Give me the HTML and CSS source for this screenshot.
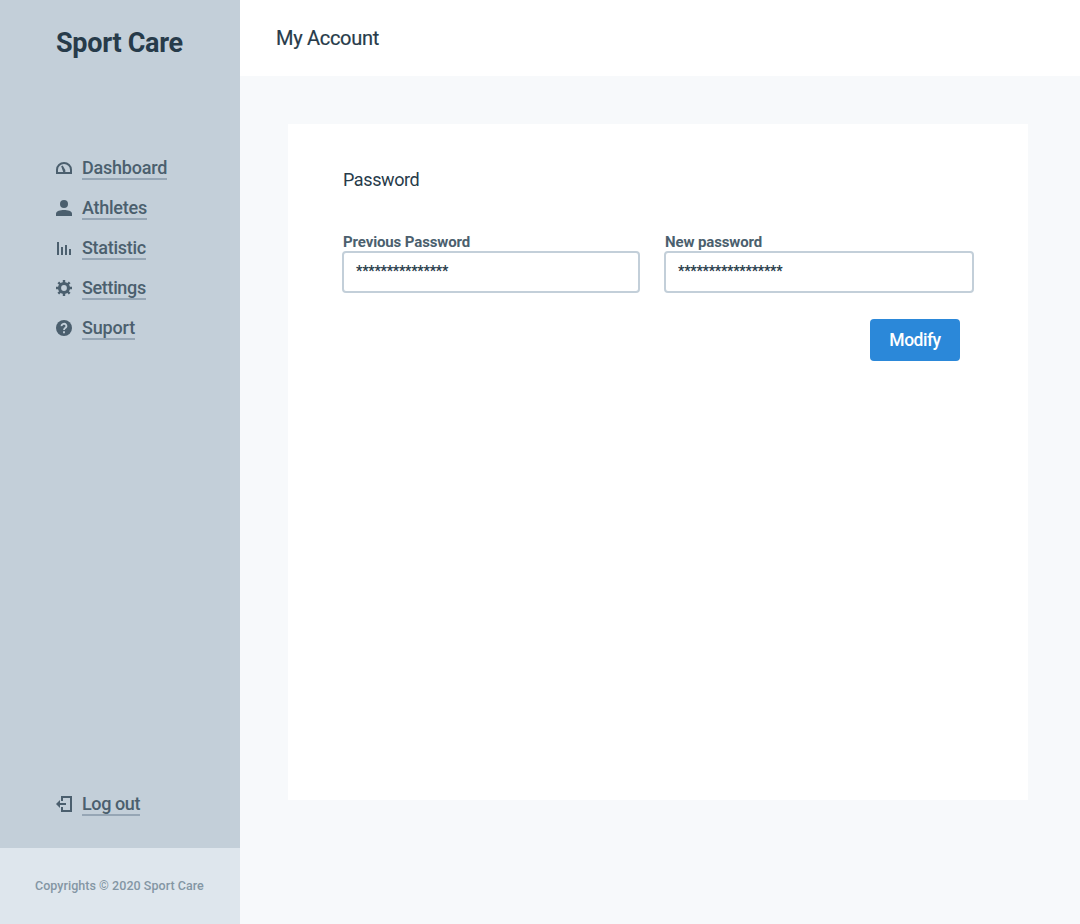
FILE: index.html
```html
<!DOCTYPE html>
<html lang="en">
<head>
<meta charset="utf-8">
<title>Sport Care</title>
<link rel="stylesheet" href="styles.css">
</head>
<body>
<div class="app">
  <aside class="sidebar">
    <h1 class="brand">Sport Care</h1>
    <nav class="nav">
      <a class="item"><svg class="icon" viewBox="0 0 16 16"><path d="M1 13V9.700a7 6.700 0 0 1 14 0V13Z" fill="none" stroke="currentColor" stroke-width="2"/><path d="M5.200 6.300 6.700 5.600 9.300 10v2H7.200Z" fill="currentColor"/></svg><span class="label dashboard">Dashboard</span></a>
      <a class="item"><svg class="icon" viewBox="0 0 16 16" fill="currentColor"><circle cx="8" cy="4" r="4"/><path d="M0 16v-2.500c0-2.400 4.500-3.500 8-3.500s8 1.100 8 3.500V16Z"/></svg><span class="label athletes">Athletes</span></a>
      <a class="item"><svg class="icon" viewBox="0 0 16 16" fill="currentColor"><path d="M1 2h2v13H1zM5 7h2v8H5zM9 5h2v10H9zM13 9h2v6h-2z"/></svg><span class="label statistic">Statistic</span></a>
      <a class="item"><svg class="icon" viewBox="0 0 16 16"><circle cx="8" cy="8" r="4.500" fill="none" stroke="currentColor" stroke-width="3.200"/><path d="M8 0v3M8 13v3M0 8h3M13 8h3M2.300 2.300l2.200 2.200M11.500 11.500l2.200 2.200M2.300 13.700l2.200-2.200M11.500 4.500l2.200-2.200" stroke="currentColor" stroke-width="2.400"/></svg><span class="label settings">Settings</span></a>
      <a class="item"><svg class="icon" viewBox="0 0 16 16"><circle cx="8" cy="8" r="8" fill="currentColor"/><path d="M5.600 6.200a2.400 2.200 0 1 1 3.600 1.700C8.300 8.500 8 8.900 8 10M8 11.300v1.900" fill="none" stroke="#c3cfd9" stroke-width="1.800"/></svg><span class="label suport">Suport</span></a>
    </nav>
    <a class="item logout"><svg class="icon" viewBox="0 0 16 16"><path d="M6 5V1h9v14H6v-4" fill="none" stroke="currentColor" stroke-width="2"/><path d="M0 8l4-4v3h6v2H4v3Z" fill="currentColor"/></svg><span class="label log">Log out</span></a>
    <footer class="footer"><span class="copy">Copyrights © 2020 Sport Care</span></footer>
  </aside>
  <div class="main">
    <header class="topbar"><h2 class="title">My Account</h2></header>
    <main class="card">
      <h3 class="heading">Password</h3>
      <form class="fields">
        <div class="field previous">
          <label class="caption">Previous Password</label>
          <div class="box">***************</div>
        </div>
        <div class="field next">
          <label class="caption">New password</label>
          <div class="box">*****************</div>
        </div>
      </form>
      <div class="actions"><button class="button" type="button">Modify</button></div>
    </main>
  </div>
</div>
</body>
</html>
```
FILE: styles.css
```css
* { box-sizing: border-box; }
body { margin: 0; font-family: Roboto, "Liberation Sans", sans-serif; color: #273b4a; }
h1, h2, h3 { margin: 0; }
.app { display: flex; width: 1080px; height: 924px; background: #f7f9fb; }
.sidebar { display: flex; flex-direction: column; width: 240px; background: #c3cfd9; }
.brand { height: 148px; padding: 27px 0 0 56px; font-size: 27px; line-height: 32px; font-weight: 700; letter-spacing: -0.3px; white-space: nowrap; }
.nav { display: flex; flex-direction: column; }
.item { display: flex; align-items: center; gap: 10px; height: 40px; padding-left: 56px; color: #4b5f6e; }
.icon { width: 16px; height: 16px; flex: none; }
.label { height: 24px; border-bottom: 2px solid #96a6b5; font-size: 18px; line-height: 24px; font-weight: 500; white-space: nowrap; }
.dashboard { letter-spacing: -0.22px; }
.athletes { letter-spacing: -0.25px; }
.statistic { letter-spacing: -0.28px; }
.settings { letter-spacing: -0.35px; }
.suport { letter-spacing: -0.17px; }
.log { letter-spacing: -0.4px; }
.logout { margin-top: auto; margin-bottom: 24px; }
.footer { height: 76px; padding: 30px 0 0 35px; background: #dee6ed; color: #8496a4; font-size: 12.500px; line-height: 16px; font-weight: 500; letter-spacing: 0.04px; white-space: nowrap; }
.main { display: flex; flex-direction: column; flex: 1; }
.topbar { height: 76px; padding: 24px 0 0 36px; background: #fff; }
.title { font-size: 20px; line-height: 28px; font-weight: 400; -webkit-text-stroke: 0.2px currentColor; letter-spacing: -0.3px; }
.card { width: 740px; height: 676px; margin: 48px; padding: 44px 54px 0; background: #fff; }
.heading { height: 66px; padding-left: 1px; font-size: 18px; line-height: 24px; font-weight: 400; letter-spacing: -0.4px; }
.fields { display: flex; gap: 24px; }
.previous { width: 298px; }
.next { width: 310px; }
.caption { display: block; height: 17px; padding-left: 1px; color: #4b5f6e; font-size: 15px; line-height: 17px; font-weight: 700; letter-spacing: -0.12px; white-space: nowrap; }
.box { height: 42px; padding: 7px 12px; border: 2px solid #c3cfd9; border-radius: 4px; font-size: 14px; line-height: 22px; font-weight: 700; letter-spacing: -0.22px; }
.actions { display: flex; justify-content: flex-end; padding: 26px 14px 0 0; }
.button { width: 90px; height: 42px; padding: 0; border: 0; border-radius: 4px; background: #2b88d9; color: #fff; font: 500 17.500px/42px Roboto, sans-serif; letter-spacing: -0.5px; }
```
